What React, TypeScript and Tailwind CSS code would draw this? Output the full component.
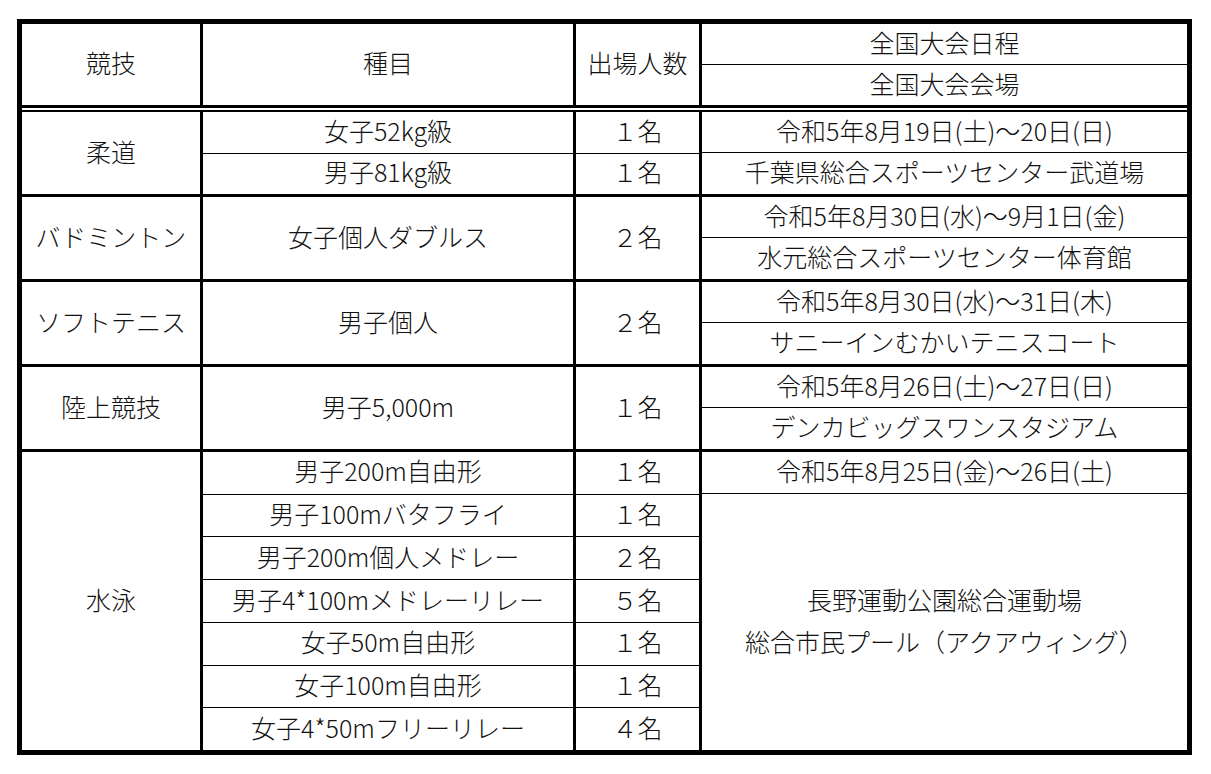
const groups = [
  {
    sport: "柔道",
    events: [
      ["女子52kg級", "１名"],
      ["男子81kg級", "１名"],
    ],
    date: "令和5年8月19日(土)～20日(日)",
    venue: "千葉県総合スポーツセンター武道場",
  },
  {
    sport: "バドミントン",
    events: [["女子個人ダブルス", "２名"]],
    date: "令和5年8月30日(水)～9月1日(金)",
    venue: "水元総合スポーツセンター体育館",
  },
  {
    sport: "ソフトテニス",
    events: [["男子個人", "２名"]],
    date: "令和5年8月30日(水)～31日(木)",
    venue: "サニーインむかいテニスコート",
  },
  {
    sport: "陸上競技",
    events: [["男子5,000m", "１名"]],
    date: "令和5年8月26日(土)～27日(日)",
    venue: "デンカビッグスワンスタジアム",
  },
];

const swimEvents = [
  ["男子200m自由形", "１名"],
  ["男子100mバタフライ", "１名"],
  ["男子200m個人メドレー", "２名"],
  ["男子4*100mメドレーリレー", "５名"],
  ["女子50m自由形", "１名"],
  ["女子100m自由形", "１名"],
  ["女子4*50mフリーリレー", "４名"],
];

// text sits a touch low in Noto's em box, the pb lifts it back to center
const T = ({ children }: { children: React.ReactNode }) => <span className="pb-[4px]">{children}</span>;

function EventRow({ name, count, first }: { name: string; count: string; first: boolean }) {
  return (
    <div className={`flex flex-1 ${first ? "" : "border-t border-black"}`}>
      <div className="flex w-[373px] items-center justify-center border-r-[3px] border-black">
        <T>{name}</T>
      </div>
      <div className="flex w-[126px] items-center justify-center border-r-[3px] border-black">
        <T>{count}</T>
      </div>
    </div>
  );
}

export default function App() {
  return (
    <main className="min-h-screen bg-white pl-[17px] pt-[19px]">
      <div className="w-[1175px] border-[5px] border-black font-['Noto_Sans_CJK_JP','Noto_Sans',sans-serif] text-[25px] font-light leading-none text-[#111]">
        {/* header */}
        <div className="flex h-[84px] border-b-[3px] border-black">
          <div className="flex w-[181px] items-center justify-center border-r-[3px] border-black">
            <T>競技</T>
          </div>
          <div className="flex w-[373px] items-center justify-center border-r-[3px] border-black">
            <T>種目</T>
          </div>
          <div className="flex w-[126px] items-center justify-center border-r-[3px] border-black">
            <T>出場人数</T>
          </div>
          <div className="flex flex-1 flex-col">
            <div className="flex h-[41px] items-center justify-center border-b border-black">
              <T>全国大会日程</T>
            </div>
            <div className="flex flex-1 items-center justify-center">
              <T>全国大会会場</T>
            </div>
          </div>
        </div>
        <div className="mt-[2px] h-[2px] bg-black" />

        {groups.map((g) => (
          <div key={g.sport} className="flex h-[85px] border-b-[3px] border-black">
            <div className="flex w-[181px] items-center justify-center border-r-[3px] border-black">
              <T>{g.sport}</T>
            </div>
            <div className="flex w-[499px] flex-col">
              {g.events.map(([name, count], i) => (
                <EventRow key={name} name={name} count={count} first={i === 0} />
              ))}
            </div>
            <div className="flex flex-1 flex-col">
              <div className="flex h-[41px] items-center justify-center border-b border-black">
                <T>{g.date}</T>
              </div>
              <div className="flex flex-1 items-center justify-center">
                <T>{g.venue}</T>
              </div>
            </div>
          </div>
        ))}

        {/* 水泳 */}
        <div className="flex h-[298px]">
          <div className="flex w-[181px] items-center justify-center border-r-[3px] border-black">
            <T>水泳</T>
          </div>
          <div className="flex w-[499px] flex-col">
            {swimEvents.map(([name, count], i) => (
              <EventRow key={name} name={name} count={count} first={i === 0} />
            ))}
          </div>
          <div className="flex flex-1 flex-col">
            <div className="flex h-[42px] items-center justify-center border-b border-black">
              <T>令和5年8月25日(金)～26日(土)</T>
            </div>
            <div className="flex flex-1 flex-col items-center justify-center pb-[4px] leading-[42px]">
              <p>長野運動公園総合運動場</p>
              <p>総合市民プール（アクアウィング）</p>
            </div>
          </div>
        </div>
      </div>
    </main>
  );
}
